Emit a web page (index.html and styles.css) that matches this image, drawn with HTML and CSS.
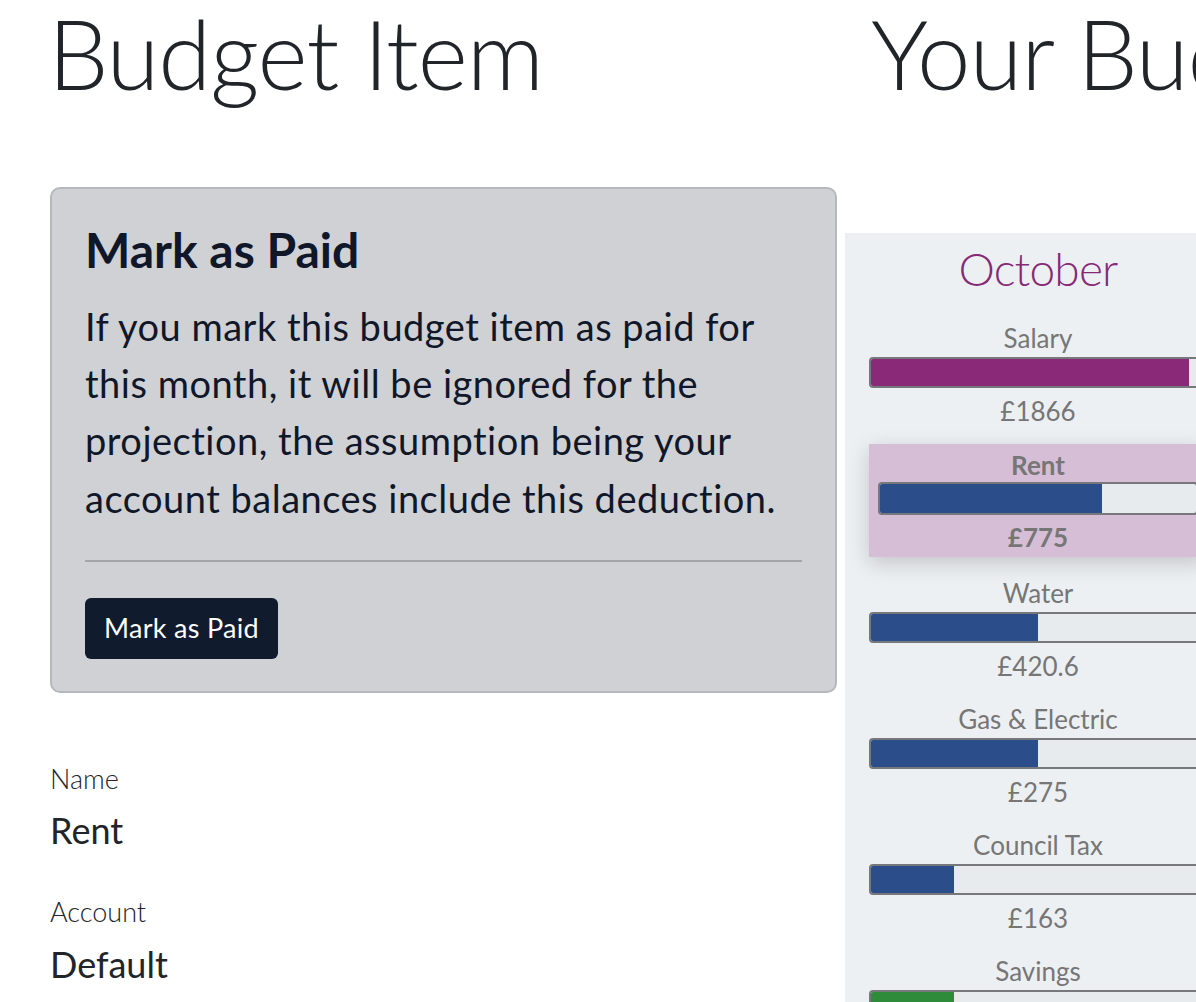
FILE: index.html
```html
<!DOCTYPE html>
<html lang="en">
<head>
<meta charset="utf-8">
<title>Budget Item</title>
<link rel="stylesheet" href="styles.css">
</head>
<body>
<div class="page">
  <section class="col-left">
    <h1 class="display">Budget Item</h1>
    <div class="card">
      <h2 class="card-title">Mark as Paid</h2>
      <p class="card-text">If you mark this budget item as paid for<br>this month, it will be ignored for the<br>projection, the assumption being your<br>account balances include this deduction.</p>
      <hr class="card-rule">
      <button class="btn-dark" type="button">Mark as Paid</button>
    </div>
    <dl class="details">
      <dt>Name</dt>
      <dd>Rent</dd>
      <dt>Account</dt>
      <dd>Default</dd>
    </dl>
  </section>
  <section class="col-right">
    <h1 class="display display-right">Your Budget</h1>
    <div class="budget-panel">
      <h2 class="month">October</h2>
      <div class="item">
        <div class="item-label">Salary</div>
        <div class="bar"><div class="fill fill-income" style="width:95.2%"></div></div>
        <div class="item-amount">£1866</div>
      </div>
      <div class="item item-active">
        <div class="item-label">Rent</div>
        <div class="bar"><div class="fill fill-expense" style="width:70.2%"></div></div>
        <div class="item-amount">£775</div>
      </div>
      <div class="item">
        <div class="item-label">Water</div>
        <div class="bar"><div class="fill fill-expense" style="width:50%"></div></div>
        <div class="item-amount">£420.6</div>
      </div>
      <div class="item">
        <div class="item-label">Gas &amp; Electric</div>
        <div class="bar"><div class="fill fill-expense" style="width:50%"></div></div>
        <div class="item-amount">£275</div>
      </div>
      <div class="item">
        <div class="item-label">Council Tax</div>
        <div class="bar"><div class="fill fill-expense" style="width:24.9%"></div></div>
        <div class="item-amount">£163</div>
      </div>
      <div class="item">
        <div class="item-label">Savings</div>
        <div class="bar"><div class="fill fill-saving" style="width:24.9%"></div></div>
        <div class="item-amount">£163</div>
      </div>
    </div>
  </section>
</div>
</body>
</html>
```

FILE: styles.css
```css
html, body {
  margin: 0;
  padding: 0;
  background: #ffffff;
  overflow: hidden;
}

body {
  font-family: "Lato", "Open Sans", "Liberation Sans", sans-serif;
  color: #212529;
}

.page {
  display: flex;
  align-items: flex-start;
  gap: 8px;
  padding-left: 50px;
  width: 1300px;
}

.col-left {
  width: 787px;
  flex-shrink: 0;
}

.col-right {
  width: 386px;
  flex-shrink: 0;
}

.display {
  font-size: 96px;
  font-weight: 300;
  line-height: 1.2;
  letter-spacing: -1px;
  margin: -5px 0 0 -2px;
  color: #212529;
  white-space: nowrap;
}

.display-right {
  margin-left: 26px;
}

/* Card */
.card {
  margin-top: 77px;
  background: #d0d1d5;
  border: 2px solid #b7b8bd;
  border-radius: 10px;
  padding: 32px 33px 32px 33px;
  color: #0f1729;
}

.card-title {
  font-size: 48px;
  font-weight: 700;
  line-height: 1.2;
  margin: 0;
}

.card-text {
  font-size: 38px;
  line-height: 57.3px;
  letter-spacing: 0.5px;
  margin: 19px 0 0 0;
}

.card-rule {
  border: 0;
  height: 2px;
  background: #a4a5aa;
  margin: 33px 0 36px 0;
}

.btn-dark {
  font-family: inherit;
  font-size: 27px;
  line-height: 40px;
  letter-spacing: 0.3px;
  color: #ffffff;
  background: #111b2e;
  border: 0;
  border-radius: 6px;
  padding: 10px 19px 11px;
  cursor: pointer;
}

/* Details list */
.details {
  margin: 66px 0 0 0;
}

.details dt {
  font-size: 27px;
  font-weight: 300;
  line-height: 40.5px;
  color: #212529;
}

.details dd {
  margin: 10px 0 40px 0;
  font-size: 36px;
  line-height: 43px;
  color: #212529;
}

/* Budget panel */
.budget-panel {
  margin-top: 123px;
  background: #edf0f3;
  padding: 7px 24px 24px;
  min-height: 900px;
}

.month {
  font-size: 46px;
  font-weight: 300;
  line-height: 56px;
  letter-spacing: -0.8px;
  color: #862a78;
  text-align: center;
  margin: 1px 0 22px 0;
}

.item {
  text-align: center;
  color: #767676;
  margin-bottom: 17px;
}

.item-label,
.item-amount {
  font-size: 26px;
  line-height: 34px;
}

.item-label {
  padding-top: 2px;
}

.bar {
  box-sizing: border-box;
  height: 31px;
  margin-top: 2px;
  border: 2px solid #77787b;
  border-radius: 4px;
  background: #e8ebee;
  overflow: hidden;
}

.fill {
  height: 100%;
}

.fill-income {
  background: #8a2978;
}

.fill-expense {
  background: #2b4e8a;
}

.fill-saving {
  background: #2e8b3a;
}

.item-amount {
  margin-top: 6px;
}

.item-active {
  margin-top: -1px;
  background: #d6bfd6;
  padding: 3px 9px;
  box-shadow: 0 6px 20px rgba(0, 0, 0, 0.18);
  font-weight: 700;
}

.item-active .item-label {
  padding-top: 1px;
}

.item-active .bar {
  height: 33px;
  margin-top: 0;
}

.item-active .item-amount {
  margin-top: 5px;
}
```
